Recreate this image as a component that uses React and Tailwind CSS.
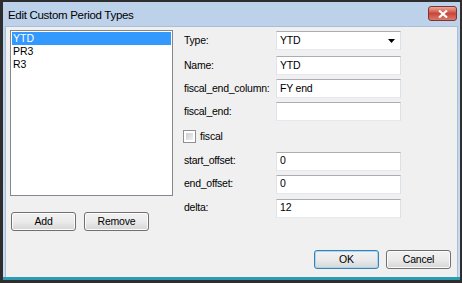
import React, { useState } from "react";

const font = { fontFamily: '"Liberation Sans", Arial, sans-serif' };

const Field = ({ label, value, mt, select }) => (
  <div className={`flex items-center ${mt}`}>
    <span className="w-[92px] shrink-0 whitespace-nowrap text-[10.5px] tracking-[-0.25px] text-black">{label}</span>
    <div className="relative shrink-0 w-[125px] h-[19px] bg-white border border-[#abadb3] border-l-[#e2e3ea] border-r-[#dbdfe6] border-b-[#e3e9ef] flex items-center pl-[3px] text-[10.5px] tracking-[-0.2px] text-black">
      {value}
      {select && (
        <svg className="absolute right-[5px] top-[7px]" width="7" height="4" viewBox="0 0 7 4">
          <path d="M0 0h7L3.5 4z" fill="#000" />
        </svg>
      )}
    </div>
  </div>
);

const WinButton = ({ children, primary, className = "" }) => (
  <button
    className={`w-[65px] h-[19px] rounded-[3px] border text-[10.5px] tracking-[-0.2px] text-black flex items-center justify-center bg-gradient-to-b from-[#f2f2f2] via-[#ebebeb] to-[#d6d6d6] ${
      primary ? "border-[#3c7fb1] shadow-[inset_0_0_0_1px_#a6d8f3]" : "border-[#707070] shadow-[inset_0_0_0_1px_#fbfbfb]"
    } ${className}`}
  >
    {children}
  </button>
);

export default function App() {
  const [selected, setSelected] = useState(0);
  const [fiscal, setFiscal] = useState(false);
  const items = ["YTD", "PR3", "R3"];

  return (
    <div style={font} className="w-[462px] h-[283px] bg-[#2e2e2e] pl-[3px] pr-[2px] pt-[2px] pb-[3px]">
      <div className="h-full flex flex-col bg-gradient-to-b from-[#bcd1ea] to-[#cddcef] px-[2px] border-b-[3px] border-[#2a9db5]">
        {/* title bar */}
        <div className="h-[24px] flex justify-between shrink-0">
          <span className="pl-[3px] pt-[5px] text-[11.5px] tracking-[-0.3px] text-black">Edit Custom Period Types</span>
          <div className="mt-[4px] mr-[1px] w-[29px] h-[15px] rounded-[3px] border border-[#80342b] bg-gradient-to-b from-[#e9a99b] via-[#c9463a] to-[#d9796b] flex items-center justify-center">
            <svg width="10" height="8" viewBox="0 0 10 8">
              <path d="M1 0.5l8 7M9 0.5l-8 7" stroke="#fff" strokeWidth="2.2" />
            </svg>
          </div>
        </div>

        {/* client */}
        <div className="flex-1 bg-[#f0f0f0] border border-[#a9bfd6] border-b-0 flex">
          <div className="flex flex-col pl-[4px] pt-[3px]">
            <div className="w-[163px] h-[166px] bg-white border border-[#828790] p-[1px]">
              {items.map((it, i) => (
                <div
                  key={it}
                  onClick={() => setSelected(i)}
                  className={`h-[13px] leading-[13px] pl-[1px] text-[10.5px] ${
                    selected === i ? "bg-[#3399ff] text-white" : "text-black"
                  }`}
                >
                  {it}
                </div>
              ))}
            </div>
            <div className="flex gap-[8px] mt-[16px] pl-[1px]">
              <WinButton>Add</WinButton>
              <WinButton>Remove</WinButton>
            </div>
          </div>

          <div className="flex flex-col flex-1 pl-[11px] pt-[4px]">
            <Field label="Type:" value="YTD" select mt="mt-0" />
            <Field label="Name:" value="YTD" mt="mt-[6px]" />
            <Field label="fiscal_end_column:" value="FY end" mt="mt-[4px]" />
            <Field label="fiscal_end:" value="" mt="mt-[4px]" />
            <div className="flex items-center mt-[8px] ml-[-1px]">
              <div
                onClick={() => setFiscal(!fiscal)}
                className="w-[13px] h-[13px] border border-[#8e8f8f] bg-white p-[2px]"
              >
                <div className="w-full h-full bg-gradient-to-br from-[#cbcfd5] to-[#f0f0f0]" />
              </div>
              <span className="ml-[4px] text-[10.5px] tracking-[-0.2px] text-black">fiscal</span>
            </div>
            <Field label="start_offset:" value="0" mt="mt-[7px]" />
            <Field label="end_offset:" value="0" mt="mt-[4px]" />
            <Field label="delta:" value="12" mt="mt-[5px]" />
            <div className="flex justify-end gap-[7px] mt-auto mb-[8px] mr-[6px]">
              <WinButton primary>OK</WinButton>
              <WinButton>Cancel</WinButton>
            </div>
          </div>
        </div>
      </div>
    </div>
  );
}
